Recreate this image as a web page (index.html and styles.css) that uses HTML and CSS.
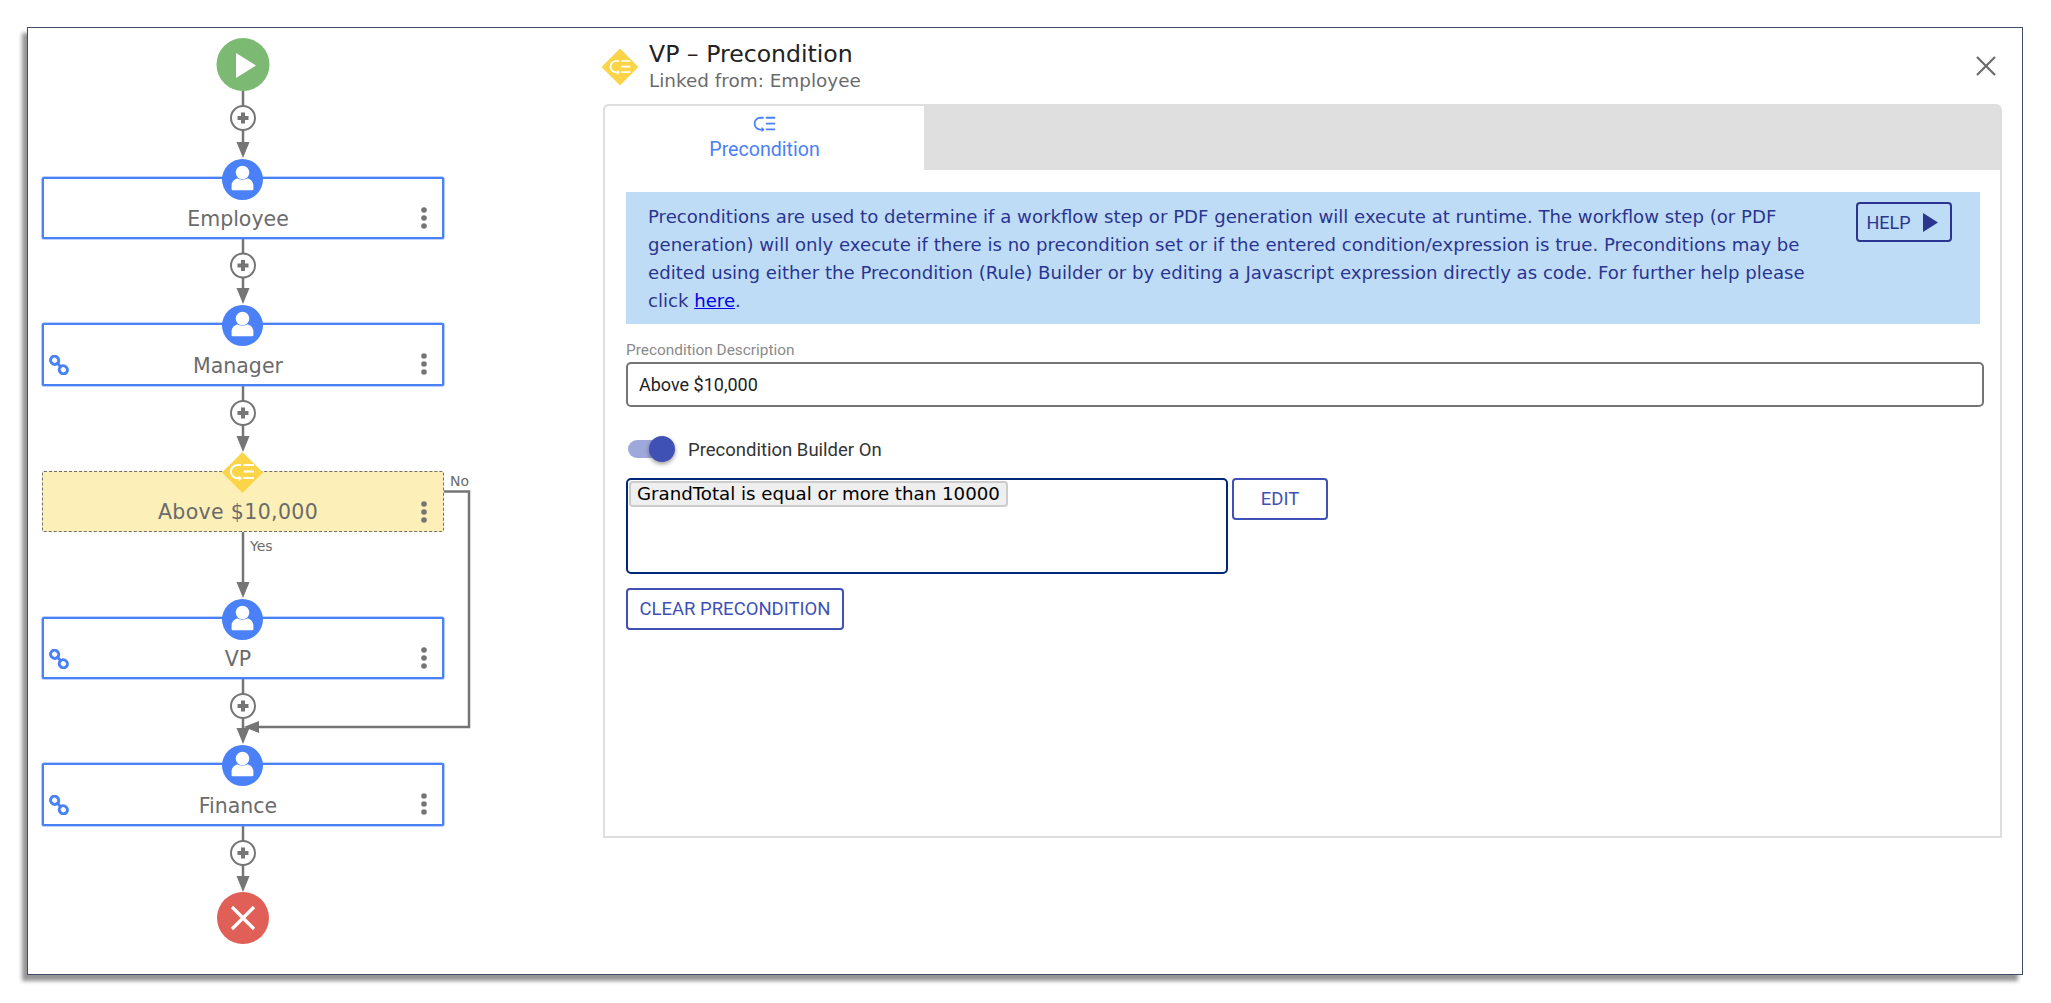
FILE: index.html
```html
<!DOCTYPE html>
<html lang="en">
<head>
<meta charset="utf-8">
<title>VP - Precondition</title>
<link rel="stylesheet" href="styles.css">
</head>
<body>
<svg class="defs" width="0" height="0" aria-hidden="true">
  <symbol id="i-cond" viewBox="-14 -10 28 20">
    <path d="M-1-7H-4.5A6.6 6.6 0 0 0-4.5 6.2H-1" fill="none" stroke="currentColor" stroke-width="2"/>
    <path d="M-3.2 3.2L0 6.2L-3.2 9.2Z" fill="currentColor"/>
    <path d="M1.5-7H12M1.5-.5H12M1.5 6H12" fill="none" stroke="currentColor" stroke-width="2"/>
  </symbol>
  <symbol id="i-user" viewBox="0 0 41 41">
    <circle cx="20.5" cy="13.5" r="6.8" fill="#fff"/>
    <path d="M9.6 30.5V26.5C9.6 22 13.5 19.6 16 19.6C18 21 23 21 25 19.6C27.5 19.6 31.4 22 31.4 26.5V30.5Q31.4 31.3 30 31.3H11Q9.6 31.3 9.6 30.5Z" fill="#fff"/>
  </symbol>
  <symbol id="i-link" viewBox="0 0 18 18">
    <g fill="none" stroke="#4a80f8" stroke-width="2.7">
      <rect x="1.4" y="1.2" width="7.4" height="7" rx="3.4" transform="rotate(45 5 4.7)"/>
      <rect x="9.2" y="9.8" width="7.4" height="7" rx="3.4" transform="rotate(45 12.9 13.3)"/>
      <path d="M7.2 7L11 11"/>
    </g>
  </symbol>
  <symbol id="i-dots" viewBox="0 0 6 22">
    <circle cx="3" cy="3" r="2.8" fill="#757575"/>
    <circle cx="3" cy="11" r="2.8" fill="#757575"/>
    <circle cx="3" cy="19" r="2.8" fill="#757575"/>
  </symbol>
</svg>

<main class="frame">
  <section class="canvas">
    <svg class="wires" viewBox="28 28 576 946" width="576" height="946" aria-hidden="true">
      <g fill="none" stroke="#757575" stroke-width="2.5">
        <path d="M243 90V145M243 239V290M243 385V438M243 532V584M243 678V730M243 826V878"/>
        <path d="M444 491.5H469V727H255"/>
      </g>
      <g fill="#757575">
        <path d="M236.5 142H249.5L243 158Z"/>
        <path d="M236.5 288H249.5L243 304Z"/>
        <path d="M236.5 436H249.5L243 452Z"/>
        <path d="M236.5 582H249.5L243 598Z"/>
        <path d="M236.5 728H249.5L243 744Z"/>
        <path d="M236.5 876H249.5L243 892Z"/>
        <path d="M243.5 727L259 721V733Z"/>
      </g>
      <g fill="#fff" stroke="#757575" stroke-width="2">
        <circle cx="243" cy="118" r="12"/>
        <circle cx="243" cy="265.5" r="12"/>
        <circle cx="243" cy="413" r="12"/>
        <circle cx="243" cy="706" r="12"/>
        <circle cx="243" cy="853" r="12"/>
      </g>
      <g fill="none" stroke="#757575" stroke-width="4">
        <path d="M237.5 118H248.5M243 112.5V123.5"/>
        <path d="M237.5 265.5H248.5M243 260V271"/>
        <path d="M237.5 413H248.5M243 407.5V418.5"/>
        <path d="M237.5 706H248.5M243 700.5V711.5"/>
        <path d="M237.5 853H248.5M243 847.5V858.5"/>
      </g>
      <circle cx="243" cy="64.5" r="26.5" fill="#7cb973"/>
      <path d="M236 53V78L256 65.5Z" fill="#fff"/>
      <circle cx="243" cy="918" r="26" fill="#e05f56"/>
      <path d="M232 907L254 929M254 907L232 929" fill="none" stroke="#fff" stroke-width="3.2"/>
    </svg>

    <article class="node node-employee">
      <span class="badge"><svg class="badge-icon"><use href="#i-user"/></svg></span>
      <span class="node-label">Employee</span>
      <svg class="kebab"><use href="#i-dots"/></svg>
    </article>
    <article class="node node-manager">
      <span class="badge"><svg class="badge-icon"><use href="#i-user"/></svg></span>
      <svg class="chain"><use href="#i-link"/></svg>
      <span class="node-label">Manager</span>
      <svg class="kebab"><use href="#i-dots"/></svg>
    </article>
    <article class="node node-cond">
      <span class="diamond"></span>
      <svg class="diamond-icon"><use href="#i-cond"/></svg>
      <span class="node-label">Above $10,000</span>
      <svg class="kebab"><use href="#i-dots"/></svg>
    </article>
    <span class="wire-label label-no">No</span>
    <span class="wire-label label-yes">Yes</span>
    <article class="node node-vp">
      <span class="badge"><svg class="badge-icon"><use href="#i-user"/></svg></span>
      <svg class="chain"><use href="#i-link"/></svg>
      <span class="node-label">VP</span>
      <svg class="kebab"><use href="#i-dots"/></svg>
    </article>
    <article class="node node-finance">
      <span class="badge"><svg class="badge-icon"><use href="#i-user"/></svg></span>
      <svg class="chain"><use href="#i-link"/></svg>
      <span class="node-label">Finance</span>
      <svg class="kebab"><use href="#i-dots"/></svg>
    </article>
  </section>

  <section class="panel">
    <header class="panel-head">
      <span class="head-icon"><svg class="head-glyph"><use href="#i-cond"/></svg></span>
      <div class="head-text">
        <h1 class="title">VP – Precondition</h1>
        <p class="subtitle">Linked from: Employee</p>
      </div>
      <svg class="close" viewBox="0 0 20 20" aria-label="Close"><path d="M1 1L19 19M19 1L1 19" fill="none" stroke="#6b6b6b" stroke-width="2.2"/></svg>
    </header>

    <div class="tabs">
      <div class="tabbar">
        <div class="tab">
          <svg class="tab-icon"><use href="#i-cond"/></svg>
          <span>Precondition</span>
        </div>
      </div>
      <div class="tab-body">
        <div class="info">
          <p class="info-text">Preconditions are used to determine if a workflow step or PDF generation will execute at runtime. The workflow step (or PDF generation) will only execute if there is no precondition set or if the entered condition/expression is true. Preconditions may be edited using either the Precondition (Rule) Builder or by editing a Javascript expression directly as code. For further help please click <a href="#">here</a>.</p>
          <button class="help" type="button">HELP <svg class="help-arrow" viewBox="0 0 15 19"><path d="M0 0L15 9.5L0 19Z" fill="#2a358f"/></svg></button>
        </div>
        <label class="field-label">Precondition Description</label>
        <div class="field">Above $10,000</div>
        <div class="toggle-row">
          <span class="toggle"><span class="thumb"></span></span>
          <span class="toggle-label">Precondition Builder On</span>
        </div>
        <div class="rule-row">
          <div class="rule-box"><span class="chip">GrandTotal is equal or more than 10000</span></div>
          <button class="btn btn-edit" type="button">EDIT</button>
        </div>
        <button class="btn btn-clear" type="button">CLEAR PRECONDITION</button>
      </div>
    </div>
  </section>
</main>
</body>
</html>
```

FILE: styles.css
```css
* { box-sizing: border-box; }
html, body { margin: 0; padding: 0; background: #fff; }
body { width: 2051px; height: 1003px; overflow: hidden; padding: 27px 0 0 27px; font-family: "DejaVu Sans", sans-serif; }
.defs { position: absolute; }

.frame {
  width: 1996px;
  height: 948px;
  display: flex;
  background: #fff;
  border: 1px solid #3f4c68;
  box-shadow: -5px 6px 4px rgba(0, 0, 0, .42);
}

/* diagram canvas */
.canvas { position: relative; width: 575px; height: 946px; flex: none; }
.wires { position: absolute; left: 0; top: 0; display: block; }
.node {
  position: absolute;
  left: 14px;
  width: 402px;
  display: flex;
  align-items: flex-end;
  justify-content: center;
  padding: 0 10px 4px 0;
  background: #fff;
  border: 2px solid #4a80f8;
  border-radius: 2px;
  box-shadow: 0 0 0 .6px rgba(74, 128, 248, .7);
}
.node-employee { top: 149px; height: 62px; }
.node-manager { top: 295px; height: 63px; }
.node-cond { top: 443px; height: 61px; background: #fcf0b8; border: 1px dashed #6f6f6f; box-shadow: none; padding-bottom: 5px; }
.node-cond .node-label { letter-spacing: .35px; }
.node-vp { top: 589px; height: 62px; }
.node-finance { top: 735px; height: 63px; }
.node-label { font-size: 20.5px; line-height: 28px; color: #6b6b6b; }
.badge {
  position: absolute;
  left: 178px;
  top: -20px;
  width: 41px;
  height: 41px;
  border-radius: 50%;
  background: #4a80f8;
}
.badge-icon { display: block; width: 41px; height: 41px; }
.diamond {
  position: absolute;
  left: 185px;
  top: -14px;
  width: 29px;
  height: 29px;
  background: #fbd448;
  transform: rotate(45deg);
}
.diamond-icon { position: absolute; left: 185px; top: -10px; width: 28px; height: 20px; color: #fff; }
.kebab { position: absolute; right: 15px; top: 28px; width: 6px; height: 22px; }
.node-cond .kebab { right: 16px; top: 29px; }
.chain { position: absolute; left: 5px; top: 30px; width: 20px; height: 20px; }
.wire-label { position: absolute; font-size: 14px; line-height: 16px; color: #6b6b6b; }
.label-no { left: 422px; top: 445px; }
.label-yes { left: 222px; top: 510px; }

/* right panel */
.panel { flex: 1; min-width: 0; display: flex; flex-direction: column; padding: 8px 20px 0 0; }
.panel-head { height: 68px; display: flex; align-items: flex-start; position: relative; }
.head-icon {
  position: relative;
  width: 26px;
  height: 26px;
  margin: 18px 16px 0 4px;
  flex: none;
  background: #fbd448;
  transform: rotate(45deg);
}
.head-glyph { position: absolute; left: 1px; top: 4px; width: 24px; height: 18px; color: #fff; transform: rotate(-45deg); }
.head-text { flex: 1; padding-top: 3px; }
.title { margin: 0; font-size: 23.6px; line-height: 30px; font-weight: 400; color: #222; }
.subtitle { margin: 0; font-size: 18.4px; line-height: 24px; color: #6b6b6b; }
.close { width: 20px; height: 20px; margin: 20px 6px 0 0; flex: none; }

.tabs { width: 1399px; height: 734px; display: flex; flex-direction: column; }
.tabbar { height: 66px; background: #dfdfdf; border-radius: 6px 6px 0 0; flex: none; }
.tab {
  width: 321px;
  height: 66px;
  display: flex;
  flex-direction: column;
  align-items: center;
  background: #fff;
  border: 2px solid #dfdfdf;
  border-width: 2px 0 0 2px;
  border-radius: 6px 0 0 0;
  font-family: Roboto, sans-serif;
  font-size: 19.6px;
  color: #4a80f8;
}
.tab-icon { width: 25px; height: 18px; margin-top: 9px; margin-bottom: 5px; }
.tab-body { flex: 1; border: 2px solid #dfdfdf; border-top: 0; padding: 22px 16px 0 21px; }

.info { height: 132px; margin-right: 4px; background: #bfdcf7; display: flex; padding: 11px 28px 0 22px; }
.info-text { margin: 0; flex: 1; font-size: 18.12px; line-height: 28px; color: #2a358f; }
.info-text a { color: #0000ee; }
.help {
  flex: none;
  width: 96px;
  height: 40px;
  margin-top: -1px;
  margin-left: 26px;
  display: flex;
  align-items: center;
  justify-content: center;
  gap: 12px;
  background: transparent;
  border: 2px solid #2a358f;
  border-radius: 4px;
  font-family: Roboto, sans-serif;
  font-size: 18px;
  color: #2a358f;
  padding: 0 4px 0 0;
}
.help-arrow { width: 15px; height: 19px; }
.field-label { display: block; margin-top: 18px; font-family: Roboto, sans-serif; font-size: 15.4px; line-height: 16px; color: #8a8a8a; }
.field {
  margin-top: 4px;
  height: 45px;
  border: 2px solid #757575;
  border-radius: 5px;
  padding: 0 11px;
  font-family: Roboto, sans-serif;
  font-size: 18px;
  line-height: 41px;
  color: #222;
}
.toggle-row { display: flex; align-items: center; margin-top: 29px; height: 26px; }
.toggle { position: relative; width: 37px; height: 18px; margin-left: 2px; border-radius: 9px; background: #9fa8da; }
.thumb {
  position: absolute;
  right: -10px;
  top: -4px;
  width: 26px;
  height: 26px;
  border-radius: 50%;
  background: #3f51b5;
  box-shadow: 0 2px 4px rgba(0, 0, 0, .4);
}
.toggle-label { margin-left: 23px; padding-top: 2px; font-family: Roboto, sans-serif; font-size: 18.5px; color: #333; }
.rule-row { display: flex; align-items: flex-start; gap: 4px; margin-top: 16px; }
.rule-box { width: 602px; height: 96px; padding: 1px; border: 2px solid #00287a; border-radius: 5px; }
.chip {
  display: inline-block;
  height: 26px;
  padding: 0 6px;
  background: #efefef;
  border: 2px solid #ccc;
  border-radius: 4px;
  font-size: 18.2px;
  line-height: 21px;
  color: #000;
}
.btn {
  height: 42px;
  background: #fff;
  border: 2px solid #3f51b5;
  border-radius: 4px;
  font-family: Roboto, sans-serif;
  font-size: 18.5px;
  color: #3f51b5;
  padding: 0;
}
.btn-edit { width: 96px; }
.btn-clear { display: block; width: 218px; margin-top: 14px; }
```
